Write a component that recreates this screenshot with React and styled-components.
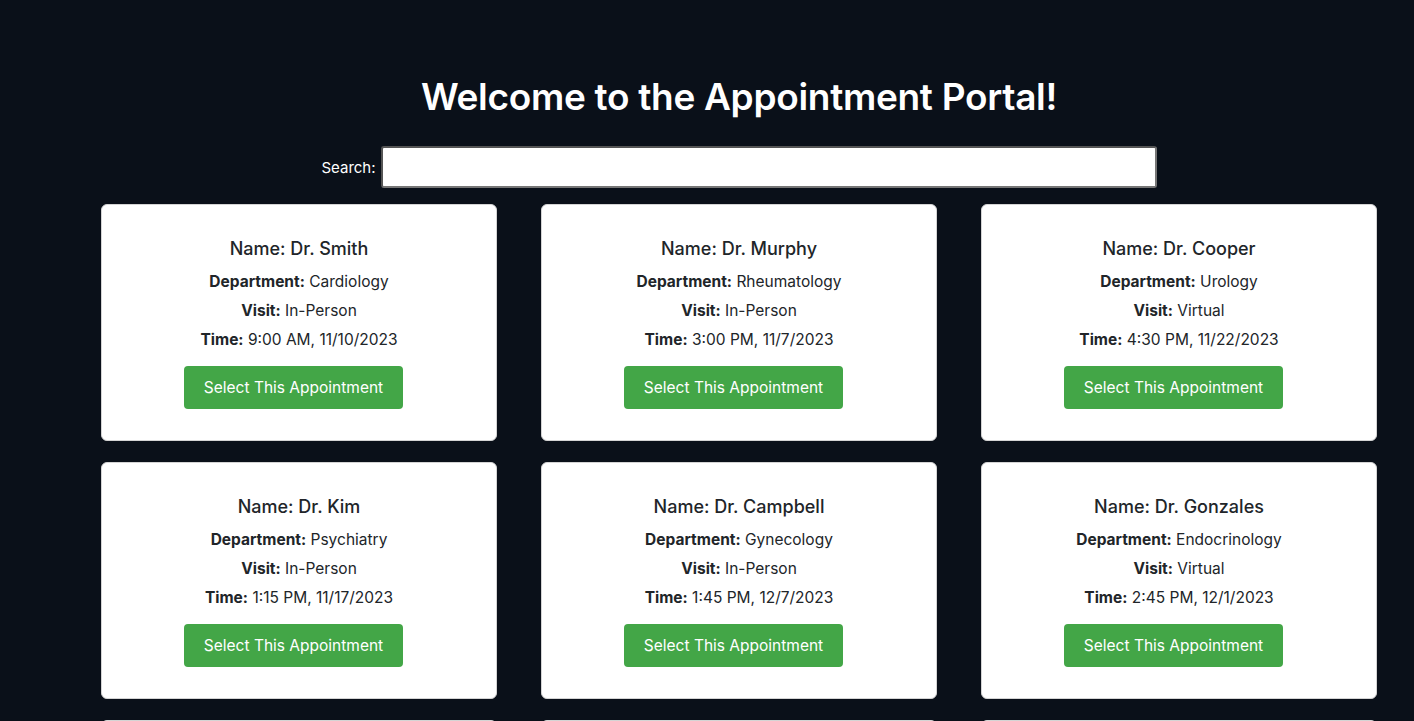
import React, { useState } from "react"
import styled, { createGlobalStyle } from "styled-components"

const GlobalStyle = createGlobalStyle`
    html, body {
        margin: 0;
        padding: 0;
        background-color: #0a1019;
        font-family: Inter, "Open Sans", "Liberation Sans", sans-serif;
    }
`

const Page = styled.div`
    padding: 0 37px 40px 101px;
    color: #fff;
`

const Title = styled.h1`
    margin: 0;
    padding-top: 73px;
    font-size: 37px;
    font-weight: 600;
    line-height: 48px;
    text-align: center;
    letter-spacing: -0.3px;
`

const SearchRow = styled.div`
    display: flex;
    align-items: center;
    justify-content: center;
    gap: 5px;
    margin-top: 25px;
    margin-bottom: 16px;
`

const SearchLabel = styled.label`
    font-size: 15px;
    color: #fff;
`

const SearchInput = styled.input`
    width: 776px;
    height: 42px;
    box-sizing: border-box;
    border: 2px solid #767676;
    border-top-color: #555;
    border-left-color: #555;
    border-radius: 3px;
    background: #fff;
    font-size: 16px;
    padding: 0 8px;
    outline: none;
`

const Grid = styled.div`
    display: grid;
    grid-template-columns: repeat(3, 396px);
    column-gap: 44px;
    row-gap: 21px;
`

const Card = styled.div`
    box-sizing: border-box;
    height: 237px;
    background: #fff;
    border: 1px solid #d4d4d4;
    border-radius: 6px;
    padding: 33px 20px 0;
    display: flex;
    flex-direction: column;
    align-items: center;
    color: #212529;
`

const Name = styled.h3`
    margin: 0 0 7px;
    font-size: 18px;
    font-weight: 500;
    line-height: 22px;
`

const Detail = styled.p`
    margin: 0;
    font-size: 15.5px;
    line-height: 29px;

    b {
        font-weight: 700;
    }
`

const SelectButton = styled.button`
    margin: 12px 11px 0 0;
    width: 219px;
    height: 43px;
    border: none;
    border-radius: 4px;
    background-color: ${props => props.selected ? "#2f8a34" : "#43a647"};
    color: #fff;
    font-family: inherit;
    font-size: 15.5px;
    cursor: pointer;
    &:hover {
        background-color: #3a9540;
    }
`

const appointments = [
    { name: "Dr. Smith", department: "Cardiology", visit: "In-Person", time: "9:00 AM, 11/10/2023" },
    { name: "Dr. Murphy", department: "Rheumatology", visit: "In-Person", time: "3:00 PM, 11/7/2023" },
    { name: "Dr. Cooper", department: "Urology", visit: "Virtual", time: "4:30 PM, 11/22/2023" },
    { name: "Dr. Kim", department: "Psychiatry", visit: "In-Person", time: "1:15 PM, 11/17/2023" },
    { name: "Dr. Campbell", department: "Gynecology", visit: "In-Person", time: "1:45 PM, 12/7/2023" },
    { name: "Dr. Gonzales", department: "Endocrinology", visit: "Virtual", time: "2:45 PM, 12/1/2023" },
    { name: "Dr. Patel", department: "Neurology", visit: "Virtual", time: "10:30 AM, 11/14/2023" },
    { name: "Dr. Nguyen", department: "Dermatology", visit: "In-Person", time: "11:00 AM, 11/20/2023" },
    { name: "Dr. Lopez", department: "Oncology", visit: "In-Person", time: "8:15 AM, 12/4/2023" }
]

export default () => {
    const [search, setSearch] = useState("")
    const [selected, setSelected] = useState(null)

    const filtered = appointments.filter(item =>
        Object.values(item).join(" ").toLowerCase().includes(search.toLowerCase())
    )

    return <Page>
        <GlobalStyle />
        <Title>Welcome to the Appointment Portal!</Title>
        <SearchRow>
            <SearchLabel htmlFor="search">Search:</SearchLabel>
            <SearchInput id="search" value={search} onChange={e => setSearch(e.target.value)} />
        </SearchRow>
        <Grid>
            {filtered.map(item => <Card key={item.name}>
                <Name>Name: {item.name}</Name>
                <Detail><b>Department:</b> {item.department}</Detail>
                <Detail><b>Visit:</b> {item.visit}</Detail>
                <Detail><b>Time:</b> {item.time}</Detail>
                <SelectButton selected={selected === item.name} onClick={() => setSelected(item.name)}>
                    Select This Appointment
                </SelectButton>
            </Card>)}
        </Grid>
    </Page>
}
